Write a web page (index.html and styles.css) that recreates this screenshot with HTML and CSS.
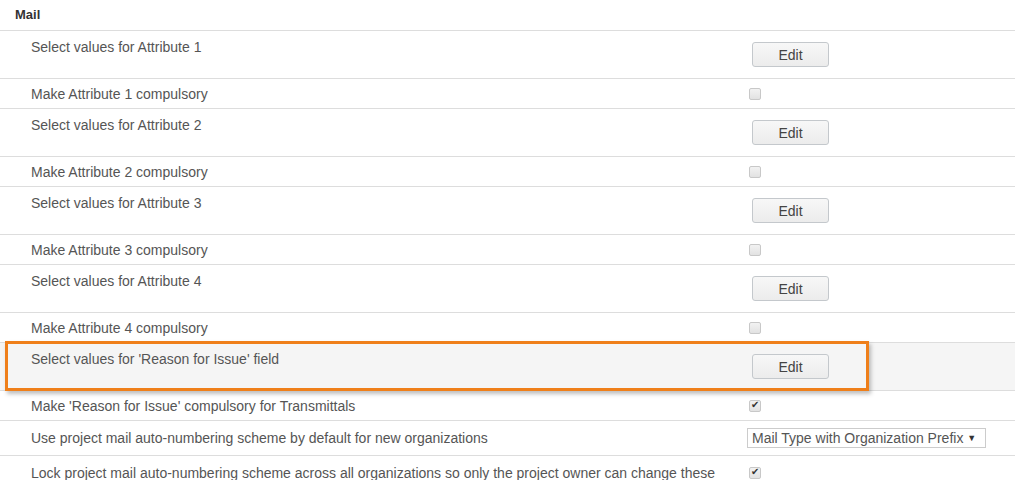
FILE: index.html
```html
<!DOCTYPE html>
<html lang="en">
<head>
  <meta charset="UTF-8">
  <title>Mail Settings</title>
  <link rel="stylesheet" href="styles.css">
</head>
<body>
  <div class="settings">
    <div class="section-title">Mail</div>

    <div class="row tall">
      <div class="label">Select values for Attribute 1</div>
      <div class="value"><button class="btn">Edit</button></div>
    </div>
    <div class="row">
      <div class="label">Make Attribute 1 compulsory</div>
      <div class="value"><input type="checkbox" class="check"></div>
    </div>

    <div class="row tall">
      <div class="label">Select values for Attribute 2</div>
      <div class="value"><button class="btn">Edit</button></div>
    </div>
    <div class="row">
      <div class="label">Make Attribute 2 compulsory</div>
      <div class="value"><input type="checkbox" class="check"></div>
    </div>

    <div class="row tall">
      <div class="label">Select values for Attribute 3</div>
      <div class="value"><button class="btn">Edit</button></div>
    </div>
    <div class="row">
      <div class="label">Make Attribute 3 compulsory</div>
      <div class="value"><input type="checkbox" class="check"></div>
    </div>

    <div class="row tall">
      <div class="label">Select values for Attribute 4</div>
      <div class="value"><button class="btn">Edit</button></div>
    </div>
    <div class="row">
      <div class="label">Make Attribute 4 compulsory</div>
      <div class="value"><input type="checkbox" class="check"></div>
    </div>

    <div class="row tall highlighted">
      <div class="label">Select values for 'Reason for Issue' field</div>
      <div class="value"><button class="btn">Edit</button></div>
      <div class="callout"></div>
    </div>
    <div class="row">
      <div class="label">Make 'Reason for Issue' compulsory for Transmittals</div>
      <div class="value"><input type="checkbox" class="check" checked></div>
    </div>
    <div class="row wide">
      <div class="label">Use project mail auto-numbering scheme by default for new organizations</div>
      <div class="value">
        <div class="dropdown">Mail Type with Organization Prefix <span class="caret">&#9660;</span></div>
      </div>
    </div>
    <div class="row wide">
      <div class="label">Lock project mail auto-numbering scheme across all organizations so only the project owner can change these</div>
      <div class="value"><input type="checkbox" class="check" checked></div>
    </div>
  </div>
</body>
</html>
```

FILE: styles.css
```css
body {
  margin: 0;
  font-family: "Liberation Sans", Arial, sans-serif;
  font-size: 14px;
  color: #555;
  background: #fff;
}
.settings {
  width: 1015px;
}
.section-title {
  height: 30px;
  line-height: 30px;
  padding-left: 15px;
  font-size: 13px;
  font-weight: bold;
  color: #333;
  border-bottom: 1px solid #ddd;
}
.row {
  position: relative;
  display: grid;
  grid-template-columns: 748px 1fr;
  min-height: 29px;
  border-bottom: 1px solid #ddd;
}
.row.tall {
  min-height: 47px;
}
.row.wide {
  min-height: 34px;
}
.label {
  padding: 7px 0 0 31px;
  line-height: 16px;
}
.row.tall .label {
  padding-top: 8px;
}
.row.wide .label {
  padding-top: 9px;
}
.value {
  display: flex;
  align-items: center;
}
.btn {
  margin-left: 4px;
  width: 77px;
  height: 25px;
  font-family: inherit;
  font-size: 14px;
  color: #444;
  background: linear-gradient(#f7f7f7, #ececec);
  border: 1px solid #c4c8cc;
  border-radius: 3px;
  cursor: pointer;
}
.check {
  appearance: none;
  -webkit-appearance: none;
  margin: 0 0 0 1px;
  width: 12px;
  height: 12px;
  border: 1px solid #c8c8c8;
  border-radius: 2px;
  background: linear-gradient(#f2f2f2, #e2e2e2);
  position: relative;
}
.check:checked::after {
  content: "\2714";
  position: absolute;
  left: 1px;
  top: -2px;
  font-size: 10px;
  color: #333;
}
.row.highlighted {
  background: #f5f5f5;
}
.callout {
  position: absolute;
  left: 5px;
  top: -2px;
  width: 858px;
  height: 44px;
  border: 3px solid #ef7f1a;
  box-shadow: 2px 3px 4px rgba(0, 0, 0, 0.25);
  pointer-events: none;
}
.dropdown {
  margin-left: -1px;
  width: 233px;
  height: 18px;
  line-height: 18px;
  padding-left: 4px;
  font-size: 14px;
  color: #555;
  border: 1px solid #ccc;
  background: #fff;
}
.caret {
  font-size: 9px;
  color: #333;
  vertical-align: 2px;
}
```
